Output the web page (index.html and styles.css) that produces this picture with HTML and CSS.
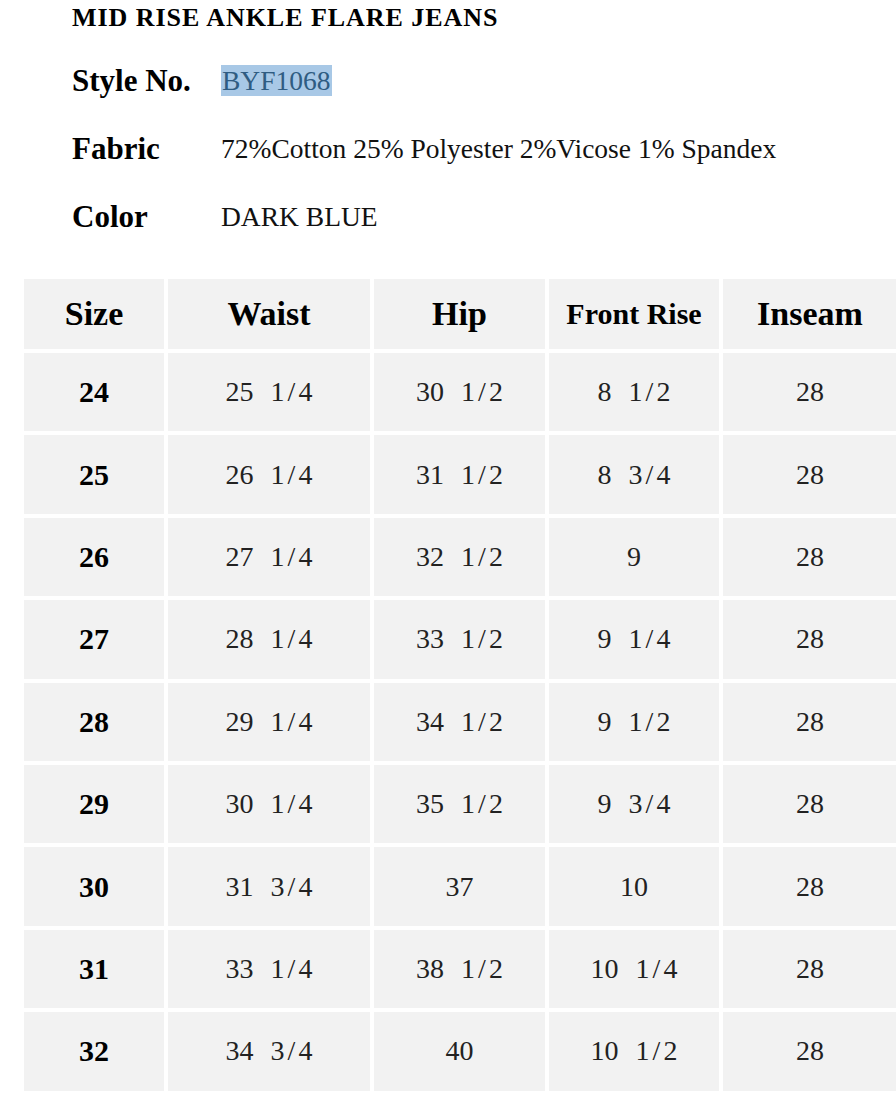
FILE: index.html
```html
<!DOCTYPE html>
<html lang="en">
<head>
<meta charset="utf-8">
<title>Mid Rise Ankle Flare Jeans</title>
<link rel="stylesheet" href="styles.css">
</head>
<body>
<div class="sheet">
  <h1 class="title">MID RISE ANKLE FLARE JEANS</h1>
  <div class="specs">
    <div class="label">Style No.</div>
    <div class="value"><span class="hl">BYF1068</span></div>
    <div class="label">Fabric</div>
    <div class="value">72%Cotton 25% Polyester 2%Vicose 1% Spandex</div>
    <div class="label">Color</div>
    <div class="value">DARK BLUE</div>
  </div>
  <table class="sizes">
    <colgroup>
      <col class="c1"><col class="c2"><col class="c3"><col class="c4"><col class="c5">
    </colgroup>
    <thead>
      <tr><th>Size</th><th>Waist</th><th>Hip</th><th class="small">Front Rise</th><th>Inseam</th></tr>
    </thead>
    <tbody>
      <tr><th>24</th><td>25  <span class="frac">1/4</span></td><td>30  <span class="frac">1/2</span></td><td>8  <span class="frac">1/2</span></td><td>28</td></tr>
      <tr><th>25</th><td>26  <span class="frac">1/4</span></td><td>31  <span class="frac">1/2</span></td><td>8  <span class="frac">3/4</span></td><td>28</td></tr>
      <tr><th>26</th><td>27  <span class="frac">1/4</span></td><td>32  <span class="frac">1/2</span></td><td>9</td><td>28</td></tr>
      <tr><th>27</th><td>28  <span class="frac">1/4</span></td><td>33  <span class="frac">1/2</span></td><td>9  <span class="frac">1/4</span></td><td>28</td></tr>
      <tr><th>28</th><td>29  <span class="frac">1/4</span></td><td>34  <span class="frac">1/2</span></td><td>9  <span class="frac">1/2</span></td><td>28</td></tr>
      <tr><th>29</th><td>30  <span class="frac">1/4</span></td><td>35  <span class="frac">1/2</span></td><td>9  <span class="frac">3/4</span></td><td>28</td></tr>
      <tr><th>30</th><td>31  <span class="frac">3/4</span></td><td>37</td><td>10</td><td>28</td></tr>
      <tr><th>31</th><td>33  <span class="frac">1/4</span></td><td>38  <span class="frac">1/2</span></td><td>10  <span class="frac">1/4</span></td><td>28</td></tr>
      <tr><th>32</th><td>34  <span class="frac">3/4</span></td><td>40</td><td>10  <span class="frac">1/2</span></td><td>28</td></tr>
    </tbody>
  </table>
</div>
</body>
</html>
```
FILE: styles.css
```css
html, body {
  margin: 0;
  padding: 0;
  background: #ffffff;
}
body {
  font-family: "Liberation Serif", "Times New Roman", serif;
  color: #000;
  overflow: hidden;
}
.sheet {
  width: 896px;
  overflow: hidden;
}
.title {
  margin: 0 0 11px 0;
  padding-left: 72px;
  font-size: 26px;
  line-height: 36px;
  font-weight: bold;
  letter-spacing: 0.95px;
  white-space: nowrap;
}
.specs {
  display: grid;
  grid-template-columns: 149px auto;
  grid-auto-rows: 68px;
  align-items: center;
  padding-left: 72px;
}
.label {
  font-size: 31px;
  font-weight: bold;
  white-space: nowrap;
}
.value {
  font-size: 27.5px;
  color: #111;
  white-space: nowrap;
}
.hl {
  background: #a8c8e6;
  color: #2f5c82;
  padding: 0 1px;
}
.sizes {
  margin: 24px 0 0 20px;
  border-collapse: separate;
  border-spacing: 4px;
  table-layout: fixed;
  width: 881px;
}
.c1 { width: 140px; }
.c2 { width: 202px; }
.c3 { width: 171px; }
.c4 { width: 170px; }
.c5 { width: 174px; }
.sizes th, .sizes td {
  background: #f2f2f2;
  text-align: center;
  vertical-align: middle;
  padding: 0;
  white-space: pre;
}
.sizes thead th {
  height: 70px;
  font-size: 34px;
  font-weight: bold;
  color: #000;
}
.sizes thead th.small {
  font-size: 30px;
}
.sizes tbody tr {
  height: 78.4px;
}
.sizes tbody th {
  font-size: 30px;
  font-weight: bold;
  color: #000;
}
.sizes tbody td {
  font-size: 28px;
  color: #222;
  word-spacing: 1.5px;
}
.frac {
  letter-spacing: 3px;
  margin-right: -3px;
}
```
